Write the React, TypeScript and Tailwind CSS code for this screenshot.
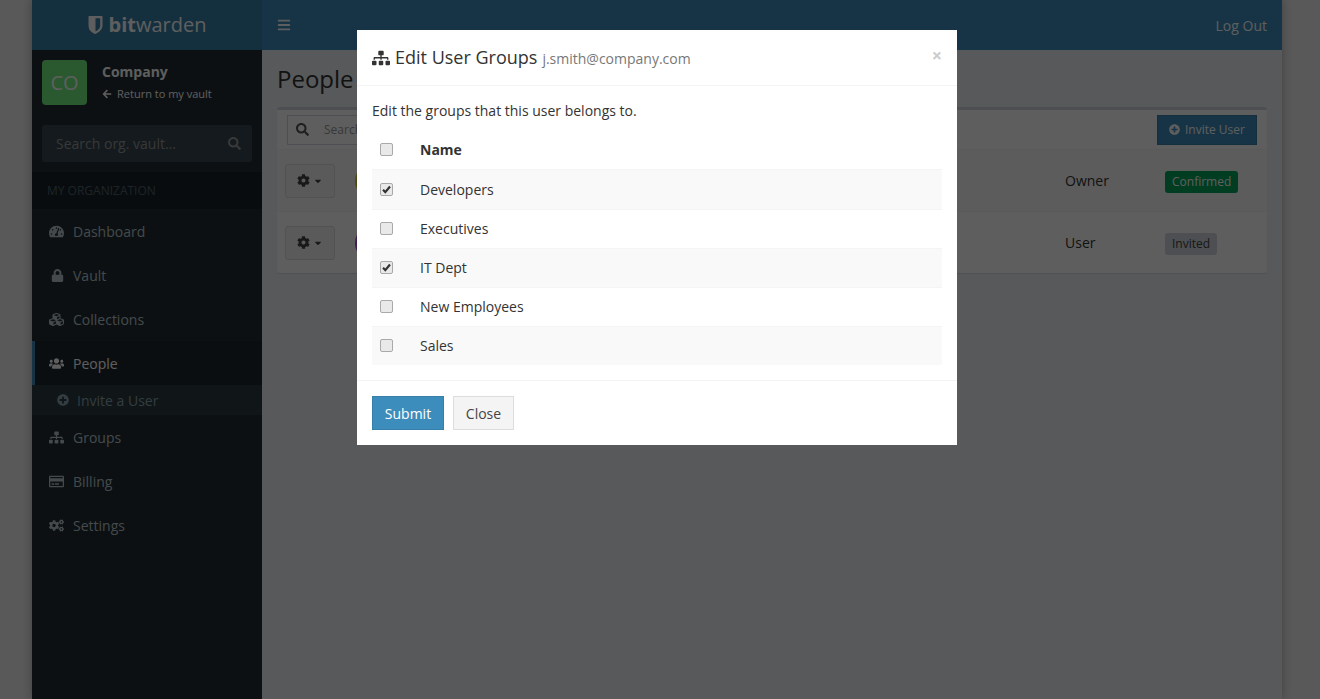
import React from "react";
import { FaArrowLeft, FaBars, FaCaretDown, FaCog, FaCogs, FaCubes, FaLock, FaPlusCircle, FaRegCreditCard, FaSearch, FaSitemap, FaTachometerAlt, FaUsers } from "react-icons/fa";

const font = { fontFamily: '"Open Sans", "Noto Sans", sans-serif' };

function Shield({ className }: { className?: string }) {
  return (
    <svg viewBox="0 0 14 18" className={className} fill="currentColor">
      <path fillRule="evenodd" d="M0.6 0h12.8c.4 0 .6.2.6.6v8.6c0 1.6-.4 3-1.3 4.2-.9 1.2-1.9 2.2-2.9 2.9-1 .7-2.1 1.3-3.2 1.7-.4-.2-1.6-.7-2.8-1.6-1.1-.8-2.100-1.800-3-3C.4 12.200 0 10.800 0 9.200V.6C0 .2.200 0 .6 0zM7 2.300v13.200c.8-.4 1.600-.9 2.300-1.500 1.500-1.200 2.400-2.900 2.400-4.500V2.300H7z" />
    </svg>
  );
}

function NavItem({ icon, label, active }: { icon: React.ReactNode; label: string; active?: boolean }) {
  return (
    <div className={`flex h-11 items-center border-l-[3px] pl-[14px] text-[14px] ${active ? "border-[#3c8dbc] bg-[#1e282c] text-white" : "border-transparent text-[#b8c7ce]"}`}>
      <span className="flex w-[24px] items-center justify-start text-[15px]">{icon}</span>
      <span>{label}</span>
    </div>
  );
}

function GearButton() {
  return (
    <button className="flex h-[34px] w-[50px] items-center justify-center gap-[3px] rounded-[3px] border border-[#ddd] bg-[#f4f4f4] text-[#444]">
      <FaCog className="text-[13px]" />
      <FaCaretDown className="text-[10px]" />
    </button>
  );
}

function UserRow({ color, role, badge, badgeClass, top }: { color: string; role: string; badge: string; badgeClass: string; top?: boolean }) {
  return (
    <div className={`flex h-[62px] items-center pl-2 pr-[10px] ${top ? "bg-[#f9f9f9]" : ""} border-t border-[#f4f4f4]`}>
      <GearButton />
      <div className={`ml-[20px] size-[36px] rounded-full ${color}`} />
      <div className="flex-1" />
      <div className="w-[100px] text-[14px] text-[#333]">{role}</div>
      <div className="w-[92px]">
        <span className={`inline-block h-[22px] rounded-[3px] px-[7px] text-[12px] leading-[22px] ${badgeClass}`}>{badge}</span>
      </div>
    </div>
  );
}

function Check({ checked }: { checked?: boolean }) {
  return (
    <span className="relative flex size-[13px]">
      <input type="checkbox" readOnly checked={!!checked} className="size-[13px] appearance-none rounded-[2px] border border-[#a9a9a9] bg-[#e9e9e9]" />
      {checked && (
        <svg viewBox="0 0 13 13" className="absolute left-0 top-0 size-[13px]" fill="none" stroke="#333" strokeWidth="2.200">
          <path d="M3 6.800l2.300 2.300L10 3.500" />
        </svg>
      )}
    </span>
  );
}

const groups = [
  { name: "Developers", checked: true, h: "h-[40px]" },
  { name: "Executives", checked: false, h: "h-[39px]" },
  { name: "IT Dept", checked: true, h: "h-[39px]" },
  { name: "New Employees", checked: false, h: "h-[39px]" },
  { name: "Sales", checked: false, h: "h-[39px]" },
];

export default function App() {
  return (
    <div className="relative h-[699px] w-[1320px] overflow-hidden bg-[#f2f2f2]" style={font}>
      <div className="mx-auto flex h-full w-[1250px] translate-x-[-3px] flex-col bg-[#ecf0f5] shadow-[0_0_10px_rgba(0,0,0,0.3)]">
        <header className="flex h-[50px] shrink-0 bg-[#3c8dbc] text-white">
          <div className="flex w-[230px] items-center justify-center gap-[6px] bg-[#367fa9] pb-[1px] text-[#fff]">
            <Shield className="h-[18px] w-[15px]" />
            <span className="text-[20px] leading-none"><b className="font-bold">bit</b>warden</span>
          </div>
          <div className="flex flex-1 items-center justify-between pl-[15px] pr-[15px]">
            <FaBars className="text-[14px]" />
            <span className="text-[14px]">Log Out</span>
          </div>
        </header>
        <div className="flex min-h-0 flex-1">
          <aside className="w-[230px] shrink-0 bg-[#222d32]">
            <div className="flex h-[75px] pl-[10px] pt-[10px]">
              <div className="flex size-[45px] items-center justify-center rounded-[4px] bg-[#74f080] text-[20px] text-white">CO</div>
              <div className="ml-[15px] pt-[3px] text-white">
                <div className="text-[14px] font-bold leading-[18px]">Company</div>
                <div className="mt-[5px] flex items-center gap-[5px] text-[11px] leading-[16px]"><FaArrowLeft className="text-[10px]" />Return to my vault</div>
              </div>
            </div>
            <div className="px-[10px]">
              <div className="flex h-[37px] items-center justify-between rounded-[3px] bg-[#374850] pl-[14px] pr-[11px] text-[14px] text-[#999]">
                <span>Search org. vault...</span>
                <FaSearch className="text-[13px]" />
              </div>
            </div>
            <div className="mt-[10px] flex h-[37px] items-center bg-[#1a2226] pl-[15px] text-[12px] text-[#4b646f]">MY ORGANIZATION</div>
            <NavItem icon={<FaTachometerAlt />} label="Dashboard" />
            <NavItem icon={<FaLock className="ml-[2px] text-[13px]" />} label="Vault" />
            <NavItem icon={<FaCubes />} label="Collections" />
            <NavItem icon={<FaUsers />} label="People" active />
            <div className="flex h-[30px] items-center bg-[#2c3b41] pl-[25px] text-[14px] text-[#8aa4af]">
              <FaPlusCircle className="mr-[8px] text-[12px]" />Invite a User
            </div>
            <NavItem icon={<FaSitemap />} label="Groups" />
            <NavItem icon={<FaRegCreditCard />} label="Billing" />
            <NavItem icon={<FaCogs />} label="Settings" />
          </aside>
          <main className="flex-1 px-[15px] pt-[15px]">
            <h1 className="text-[24px] leading-[28px] text-[#333]">People</h1>
            <div className="mt-[14px] rounded-[3px] border-t-[3px] border-[#d2d6de] bg-white shadow-[0_1px_1px_rgba(0,0,0,0.1)]">
              <div className="flex h-[39px] items-center justify-between px-[10px]">
                <div className="flex h-[30px] w-[300px] items-center border border-[#d2d6de] pl-[8px] text-[12px] text-[#999]">
                  <FaSearch className="text-[13px] text-[#555]" />
                  <span className="ml-[15px]">Search people...</span>
                </div>
                <button className="flex h-[30px] w-[100px] items-center justify-center gap-[5px] border border-[#367fa9] bg-[#3c8dbc] text-[12px] text-white">
                  <FaPlusCircle className="text-[11px]" />Invite User
                </button>
              </div>
              <UserRow top color="bg-[#c8c832]" role="Owner" badge="Confirmed" badgeClass="bg-[#00a65a] text-white" />
              <UserRow color="bg-[#a44fd0]" role="User" badge="Invited" badgeClass="bg-[#d2d6de] text-[#444]" />
            </div>
          </main>
        </div>
      </div>

      <div className="absolute inset-0 bg-black/[.63]" />

      <div className="absolute left-[357px] top-[30px] h-[415px] w-[600px] bg-white text-[14px] text-[#333]">
        <div className="flex h-[56px] items-center justify-between border-b border-[#f4f4f4] pl-[15px] pr-[15px]">
          <div className="flex items-center">
            <FaSitemap className="text-[18px] text-[#333]" />
            <span className="ml-[5px] text-[18px]">Edit User Groups</span>
            <span className="ml-[5px] pt-[2px] text-[14px] text-[#777]">j.smith@company.com</span>
          </div>
          <span className="mb-[6px] text-[18px] font-bold leading-none text-[#ccc]">×</span>
        </div>
        <div className="px-[15px] pt-[15px]">
          <p className="text-[14px] leading-[20px]">Edit the groups that this user belongs to.</p>
          <table className="mt-[9px] w-full border-collapse">
            <thead>
              <tr className="h-[39px]">
                <th className="w-[48px] pl-[8px] text-left align-middle"><Check /></th>
                <th className="text-left text-[14px] font-bold">Name</th>
              </tr>
            </thead>
            <tbody>
              {groups.map((g, i) => (
                <tr key={g.name} className={`${g.h} border-t border-[#f4f4f4] ${i % 2 === 0 ? "bg-[#f9f9f9]" : ""}`}>
                  <td className="pl-[8px] align-middle"><Check checked={g.checked} /></td>
                  <td className="align-middle">{g.name}</td>
                </tr>
              ))}
            </tbody>
          </table>
        </div>
        <div className="mt-[15px] flex gap-[9px] border-t border-[#f4f4f4] px-[15px] pt-[15px]">
          <button className="h-[34px] w-[72px] border border-[#367fa9] bg-[#3c8dbc] text-[14px] text-white">Submit</button>
          <button className="h-[34px] w-[61px] border border-[#ddd] bg-[#f4f4f4] text-[14px] text-[#444]">Close</button>
        </div>
      </div>
    </div>
  );
}
